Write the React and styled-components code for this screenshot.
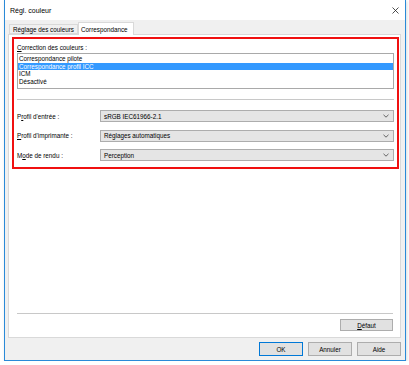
import React from 'react';
import styled, { createGlobalStyle } from 'styled-components';

const GlobalStyle = createGlobalStyle`
  body {
    margin: 0;
    background: #ffffff;
    font-family: "Liberation Sans", Arial, sans-serif;
    color: #000;
  }
`;

const Window = styled.div`
  margin-left: 4px;
  width: 402px;
  height: 361px;
  box-sizing: border-box;
  border: 1px solid #2a8ad8;
  border-top: none;
  display: flex;
  flex-direction: column;
  box-shadow: 1px 1px 3px rgba(0, 0, 0, 0.15);
`;

const TitleBar = styled.div`
  height: 20px;
  background: #ffffff;
  display: flex;
  align-items: center;
  padding: 0 6px 0 5px;
  font-size: 7px;
`;

const Close = styled.svg`
  margin-left: auto;
  width: 7px;
  height: 7px;
`;

const Body = styled.div`
  flex: 1;
  background: #f0f0f0;
  padding: 2px 4px 0 3px;
  display: flex;
  flex-direction: column;
`;

const TabRow = styled.div`
  display: flex;
  align-items: flex-end;
  height: 12px;
  padding-left: 1px;
  position: relative;
  z-index: 1;
`;

const Tab = styled.div`
  box-sizing: border-box;
  width: ${p => p.$w}px;
  height: ${p => (p.$active ? 13 : 10)}px;
  margin-bottom: ${p => (p.$active ? -1 : 0)}px;
  border: 1px solid #d9d9d9;
  border-bottom: ${p => (p.$active ? 'none' : '1px solid #d9d9d9')};
  background: ${p => (p.$active ? '#ffffff' : '#f0f0f0')};
  font-size: 6.3px;
  display: flex;
  align-items: ${p => (p.$active ? 'flex-start' : 'center')};
  padding: ${p => (p.$active ? '3px 0 0 2px' : '0 0 0 3px')};
  white-space: nowrap;
`;

const Panel = styled.div`
  box-sizing: border-box;
  height: 304px;
  border: 1px solid #d9d9d9;
  background: #ffffff;
  display: flex;
  flex-direction: column;
`;

const Highlight = styled.div`
  box-sizing: border-box;
  margin: 2px 0 0 3px;
  width: 387px;
  height: 132px;
  border: 2px solid #f01010;
  padding: 2px 3px 0 3px;
  display: flex;
  flex-direction: column;
`;

const Label = styled.div`
  font-size: 6.3px;
  height: ${p => p.$h || 12}px;
  display: flex;
  align-items: center;
  white-space: nowrap;
  width: ${p => (p.$w ? `${p.$w}px` : 'auto')};
  flex-shrink: 0;
`;

const ListBox = styled.div`
  box-sizing: border-box;
  height: 36px;
  border: 1px solid #a9a9a9;
  padding-top: 1px;
`;

const ListItem = styled.div`
  height: 7.5px;
  line-height: 7.5px;
  font-size: 6.3px;
  padding-left: 1px;
  background: ${p => (p.$selected ? '#3399ff' : 'transparent')};
  color: ${p => (p.$selected ? '#ffffff' : '#000000')};
  white-space: nowrap;
`;

const Separator = styled.div`
  height: 1px;
  background: #c8c8c8;
  margin: ${p => p.$m};
`;

const ComboRow = styled.div`
  display: flex;
  align-items: center;
  height: 12px;
  margin-top: ${p => p.$mt}px;
`;

const Combo = styled.div`
  box-sizing: border-box;
  flex: 1;
  height: 12px;
  border: 1px solid #adadad;
  background: #e5e5e5;
  display: flex;
  align-items: center;
  padding: 0 4px 0 3px;
  font-size: 6.3px;
`;

const Chevron = styled.svg`
  margin-left: auto;
  width: 6px;
  height: 4px;
`;

const Acc = styled.span`
  text-decoration: underline;
`;

const Footer = styled.div`
  margin-top: auto;
  display: flex;
  flex-direction: column;
`;

const ButtonRow = styled.div`
  display: flex;
  justify-content: flex-end;
  gap: ${p => p.$gap || 0}px;
  padding: ${p => p.$pad};
`;

const Button = styled.div`
  box-sizing: border-box;
  width: ${p => p.$w}px;
  height: ${p => p.$h}px;
  border: 1px solid ${p => (p.$default ? '#0078d7' : '#adadad')};
  background: #e1e1e1;
  font-size: 6.3px;
  display: flex;
  align-items: center;
  justify-content: center;
`;

const ChevronIcon = () => (
  <Chevron viewBox="0 0 6 4">
    <path d="M0.5 0.8 L3 3.2 L5.5 0.8" fill="none" stroke="#555" strokeWidth="0.9" />
  </Chevron>
);

const combos = [
  { label: <>P<Acc>r</Acc>ofil d'entrée :</>, value: 'sRGB IEC61966-2.1', mt: 10 },
  { label: <><Acc>P</Acc>rofil d'imprimante :</>, value: 'Réglages automatiques', mt: 7.5 },
  { label: <>M<Acc>o</Acc>de de rendu :</>, value: 'Perception', mt: 7.5 },
];

const items = ['Correspondance pilote', 'Correspondance profil ICC', 'ICM', 'Désactivé'];

export default function App() {
  return (
    <>
      <GlobalStyle />
      <Window>
        <TitleBar>
          Régl. couleur
          <Close viewBox="0 0 7 7">
            <path d="M0.5 0.5 L6.5 6.5 M6.5 0.5 L0.5 6.5" stroke="#222" strokeWidth="0.8" />
          </Close>
        </TitleBar>
        <Body>
          <TabRow>
            <Tab $w={69}>Réglage des couleurs</Tab>
            <Tab $w={56} $active>Correspondance</Tab>
          </TabRow>
          <Panel>
            <Highlight>
              <Label><span><Acc>C</Acc>orrection des couleurs :</span></Label>
              <ListBox>
                {items.map((t, i) => (
                  <ListItem key={t} $selected={i === 1}>{t}</ListItem>
                ))}
              </ListBox>
              <Separator $m="10px 0 0 0" />
              {combos.map((c, i) => (
                <ComboRow key={i} $mt={c.mt}>
                  <Label $w={83}><span>{c.label}</span></Label>
                  <Combo>
                    {c.value}
                    <ChevronIcon />
                  </Combo>
                </ComboRow>
              ))}
            </Highlight>
            <Footer>
              <Separator $m="0 7px 0 8px" />
              <ButtonRow $pad="5px 7px 6px 0">
                <Button $w={53} $h={12}><span><Acc>D</Acc>éfaut</span></Button>
              </ButtonRow>
            </Footer>
          </Panel>
          <ButtonRow $gap={5} $pad="4px 0 0 0">
            <Button $w={44} $h={14} $default>OK</Button>
            <Button $w={44} $h={14}>Annuler</Button>
            <Button $w={44} $h={14}>Aide</Button>
          </ButtonRow>
        </Body>
      </Window>
    </>
  );
}
